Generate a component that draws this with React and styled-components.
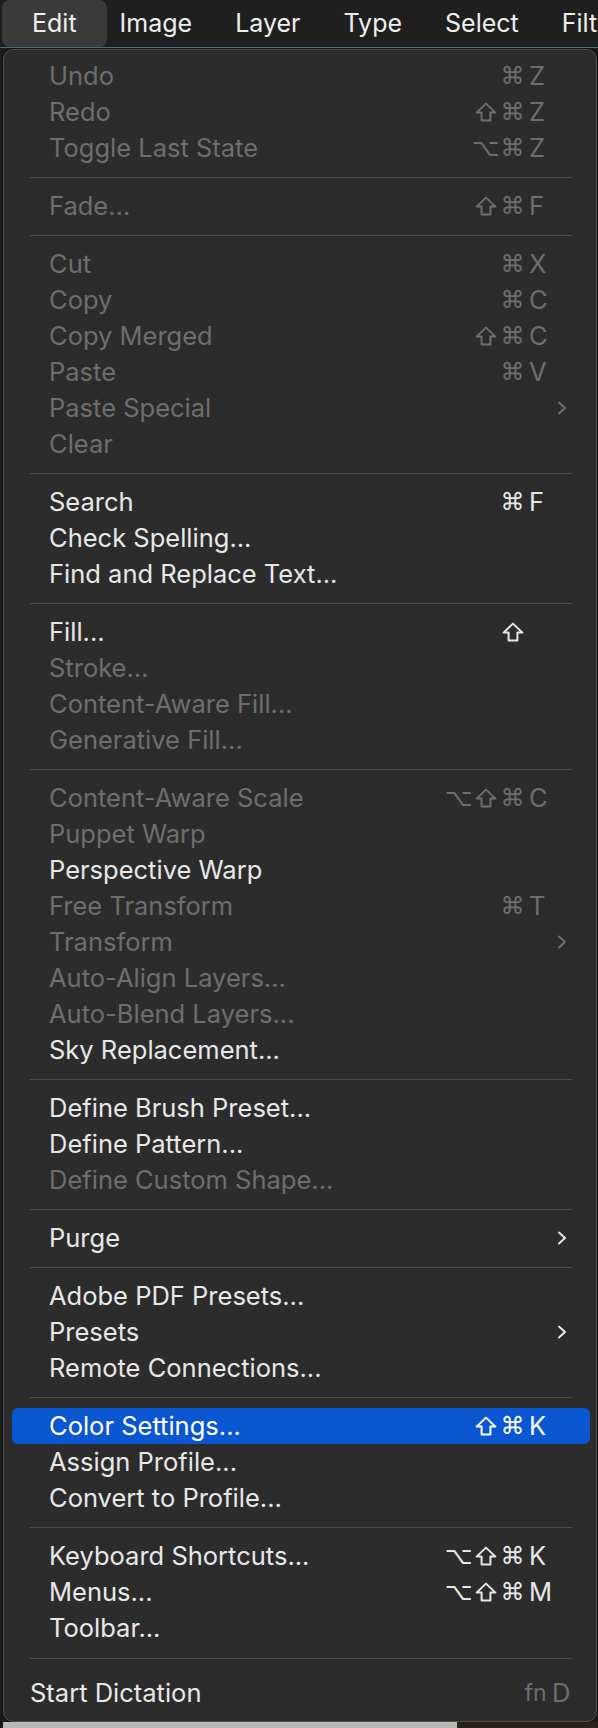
import React from 'react';
import styled, { createGlobalStyle } from 'styled-components';

const GlobalStyle = createGlobalStyle`
  html, body {
    margin: 0;
    padding: 0;
    background: #1a1a1a;
  }
  body {
    font-family: Inter, "Noto Sans", "Liberation Sans", sans-serif;
    -webkit-font-smoothing: antialiased;
  }
`;

const titles = ['Edit', 'Image', 'Layer', 'Type', 'Select', 'Filter'];

const groups = [
  [
    { label: 'Undo', mods: '⌘', key: 'Z', off: true },
    { label: 'Redo', mods: '⇧⌘', key: 'Z', off: true },
    { label: 'Toggle Last State', mods: '⌥⌘', key: 'Z', off: true },
  ],
  [{ label: 'Fade...', mods: '⇧⌘', key: 'F', off: true }],
  [
    { label: 'Cut', mods: '⌘', key: 'X', off: true },
    { label: 'Copy', mods: '⌘', key: 'C', off: true },
    { label: 'Copy Merged', mods: '⇧⌘', key: 'C', off: true },
    { label: 'Paste', mods: '⌘', key: 'V', off: true },
    { label: 'Paste Special', sub: true, off: true },
    { label: 'Clear', off: true },
  ],
  [
    { label: 'Search', mods: '⌘', key: 'F' },
    { label: 'Check Spelling...' },
    { label: 'Find and Replace Text...' },
  ],
  [
    { label: 'Fill...', mods: '⇧' },
    { label: 'Stroke...', off: true },
    { label: 'Content-Aware Fill...', off: true },
    { label: 'Generative Fill...', off: true },
  ],
  [
    { label: 'Content-Aware Scale', mods: '⌥⇧⌘', key: 'C', off: true },
    { label: 'Puppet Warp', off: true },
    { label: 'Perspective Warp' },
    { label: 'Free Transform', mods: '⌘', key: 'T', off: true },
    { label: 'Transform', sub: true, off: true },
    { label: 'Auto-Align Layers...', off: true },
    { label: 'Auto-Blend Layers...', off: true },
    { label: 'Sky Replacement...' },
  ],
  [
    { label: 'Define Brush Preset...' },
    { label: 'Define Pattern...' },
    { label: 'Define Custom Shape...', off: true },
  ],
  [{ label: 'Purge', sub: true }],
  [
    { label: 'Adobe PDF Presets...' },
    { label: 'Presets', sub: true },
    { label: 'Remote Connections...' },
  ],
  [
    { label: 'Color Settings...', mods: '⇧⌘', key: 'K', selected: true },
    { label: 'Assign Profile...' },
    { label: 'Convert to Profile...' },
  ],
  [
    { label: 'Keyboard Shortcuts...', mods: '⌥⇧⌘', key: 'K' },
    { label: 'Menus...', mods: '⌥⇧⌘', key: 'M' },
    { label: 'Toolbar...' },
  ],
];

function Chevron() {
  return (
    <svg width="10" height="14" viewBox="0 0 10 14" fill="none">
      <path d="M2 1.5 L8 7 L2 12.5" stroke="currentColor" strokeWidth="2" strokeLinecap="round" strokeLinejoin="round" />
    </svg>
  );
}

// shift key symbol, drawn since the installed fonts only have a narrow one
function ShiftIcon() {
  return (
    <svg width="22" height="20" viewBox="0 0 22 20" fill="none">
      <path d="M11 1.6 L20.4 10.6 H15.4 V18.6 H6.6 V10.6 H1.6 Z" stroke="currentColor" strokeWidth="2" strokeLinejoin="round" />
    </svg>
  );
}

export default function App() {
  return (
    <Page>
      <GlobalStyle />
      <MenuBar>
        {titles.map((t, i) => (
          <MenuTitle key={t} $active={i === 0}>{t}</MenuTitle>
        ))}
      </MenuBar>
      <Workspace>
        <Menu>
          {groups.map((items, gi) => (
            <React.Fragment key={gi}>
              {gi > 0 && <Separator />}
              {items.map((item) => (
                <Row key={item.label} $off={item.off} $selected={item.selected}>
                  <Label>{item.label}</Label>
                  <Mods>
                    {(item.mods || '').split('').map((m, mi) => (
                      <Mod key={mi}>{m === '⇧' ? <ShiftIcon /> : m}</Mod>
                    ))}
                  </Mods>
                  <Key>{item.key}</Key>
                  <Trail>{item.sub && <Chevron />}</Trail>
                </Row>
              ))}
            </React.Fragment>
          ))}
          <Separator $last />
          <Row $indent={18} $trail={17}>
            <Label>Start Dictation</Label>
            <Mods $dim>
              <Fn>fn</Fn>
            </Mods>
            <Key $dim>D</Key>
            <Trail />
          </Row>
        </Menu>
        <Backdrop>
          <BackdropPane $tone="#b9b9b9" $grow={454} />
          <BackdropPane $tone="#2a2219" $grow={140} />
        </Backdrop>
      </Workspace>
    </Page>
  );
}

const Page = styled.div`
  width: 598px;
  height: 1728px;
  overflow: hidden;
  background: #1a1a1a;
`;

const MenuBar = styled.div`
  display: flex;
  align-items: stretch;
  height: 47px;
  background: #1f1f1f;
  border-bottom: 1px solid #4d6f80;
  white-space: nowrap;
  overflow: hidden;
`;

const MenuTitle = styled.div`
  flex: none;
  padding: 0 ${(p) => (p.$active ? '30px' : '21.5px')};
  margin: ${(p) => (p.$active ? '0 -8.5px 0 2px' : '0')};
  line-height: 47px;
  font-size: 25px;
  color: #efefef;
  border-radius: 8px;
  background: ${(p) => (p.$active ? '#3a3a3a' : 'transparent')};
  position: relative;
  z-index: ${(p) => (p.$active ? 0 : 1)};
`;

const Workspace = styled.div`
  padding: 1px 1px 0 3px;
`;

const Menu = styled.div`
  background: #2c2c2c;
  border: 1px solid #4f4f4f;
  border-radius: 10px;
  padding: 7.5px 0 10px;
  box-shadow: 0 0 0 1px #111;
`;

const Row = styled.div`
  display: grid;
  grid-template-columns: 1fr auto 24px ${(p) => p.$trail || 40}px;
  align-items: center;
  height: 36px;
  margin: 0 6px 0 8px;
  padding-left: ${(p) => p.$indent || 37}px;
  border-radius: 6px;
  font-size: 25.5px;
  color: ${(p) => (p.$selected ? '#ffffff' : p.$off ? '#6e6e6e' : '#e8e8e8')};
  background: ${(p) => (p.$selected ? '#0b56d1' : 'transparent')};
`;

const Label = styled.span`
  white-space: nowrap;
  line-height: 36px;
`;

const Mods = styled.span`
  display: flex;
  justify-content: flex-end;
  color: ${(p) => (p.$dim ? '#6e6e6e' : 'inherit')};
`;

const Mod = styled.span`
  display: flex;
  align-items: center;
  justify-content: center;
  width: 27px;
  height: 36px;
  font-family: "DejaVu Sans", sans-serif;
  font-size: 24px;
`;

const Fn = styled.span`
  width: 27px;
  text-align: center;
  font-size: 23px;
  line-height: 36px;
`;

const Key = styled.span`
  padding-left: 3px;
  line-height: 36px;
  color: ${(p) => (p.$dim ? '#6e6e6e' : 'inherit')};
`;

const Trail = styled.span`
  display: flex;
  align-items: center;
  padding-left: 7px;
`;

const Separator = styled.div`
  height: 1px;
  background: #4c4c4c;
  margin: ${(p) => (p.$last ? '12px 24px 16px 26px' : '11px 24px 10px 26px')};
`;

const Backdrop = styled.div`
  display: flex;
  height: 6px;
`;

const BackdropPane = styled.div`
  flex: ${(p) => p.$grow} 0 0;
  background: ${(p) => p.$tone};
`;
